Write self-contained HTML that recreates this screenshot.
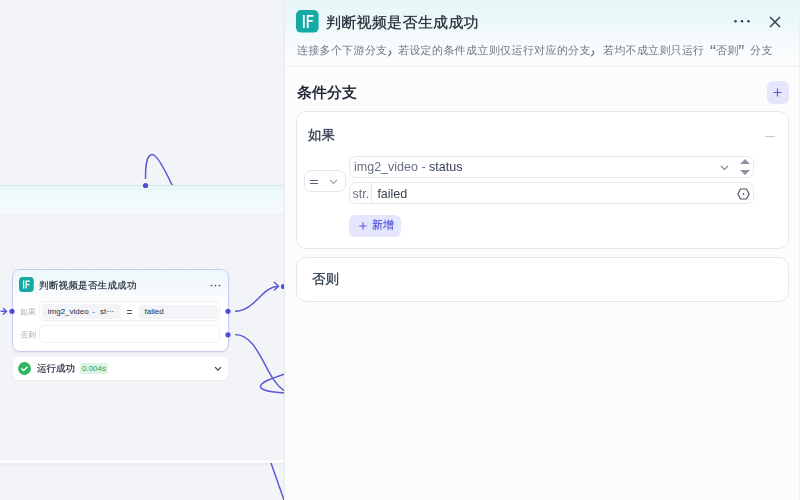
<!DOCTYPE html>
<html><head><meta charset="utf-8">
<style>
*{box-sizing:border-box;margin:0;padding:0}
html,body{width:800px;height:500px;overflow:hidden;background:#f2f4f7;font-family:"Liberation Sans",sans-serif}
body{position:relative}
.a{position:absolute}
.t{position:absolute;white-space:nowrap}
.s2{transform:scale(0.5);transform-origin:0 0;will-change:transform}
/* group container */
#grp{left:0;top:185px;width:285px;height:278px;background:#f2f4f7;border-top:1px solid #d3e6e5;box-shadow:0 2px 2px rgba(16,24,40,0.04)}
#grpHead{left:0;top:0;width:285px;height:27px;background:linear-gradient(180deg,#e9f7f8 0%,#f0fafa 50%,#f7fcfc 100%)}
#grpBody{left:0;top:27px;width:285px;height:247px;background-color:#f2f4f7;background-image:radial-gradient(circle at 2px 2px,#e6e8ec 0px,#e6e8ec 0.5px,rgba(242,244,247,0) 1.1px);background-size:12px 12px;background-position:-0.3px 5px}
#grpBottom{left:0;top:274px;width:285px;height:3px;background:#fdfdfe}
/* node */
#node{left:12px;top:269px;width:217px;height:82.5px;background:#fff;border:1px solid #c7cbf3;border-radius:8px;box-shadow:0 1px 2px rgba(16,24,40,0.05);overflow:hidden}
#nodeHead{left:0;top:0;width:100%;height:34px;background:linear-gradient(180deg,#ecf7f9 0%,#f5fafc 55%,#ffffff 100%)}
.nbox{position:absolute;background:#fff;border:1px solid #eff0f3;border-radius:5px}
.chip{position:absolute;background:#f2f4f7;border-radius:4px}
.ctext{font-size:8px;line-height:12px;color:#354052;-webkit-text-stroke:0.08px #354052}
#status{left:12.5px;top:357px;width:215px;height:23px;background:#fff;border-radius:6px;box-shadow:0 1px 2px rgba(16,24,40,0.04)}
/* panel */
#panel{left:285px;top:0;width:515px;height:500px;background:#fcfcfd;box-shadow:-1px 0 3px rgba(16,24,40,0.03)}
#pedge{left:284px;top:0;width:1px;height:500px;background:#e9ebef}
#phead{left:285px;top:0;width:515px;height:67px;background:linear-gradient(180deg,#e7f7f8 0%,#ebf8f9 30%,#f3fafb 55%,#f9fcfd 75%,#fcfcfd 100%);border-bottom:1px solid #eef0f3}
.pdesc{top:42px;font-size:22px;letter-spacing:1px;line-height:34px;color:#6d7485}
.card{position:absolute;background:#fff;border:1px solid #e4e7ec;border-radius:10px}
.row{position:absolute;background:#fff;border:1px solid #e6e8ed;border-radius:7px}
.vtext{font-size:12.5px;line-height:17px;color:#354052}
</style></head><body>

<!-- top curve (under group header) -->
<svg class="a" style="left:0;top:0" width="285" height="500">
  <path d="M145.5 179 C145.5 168 146 155 152 154.5 C157 154 166 172 172.5 186" fill="none" stroke="#5858d8" stroke-width="1.45"/>
</svg>

<div id="grp" class="a">
  <div id="grpHead" class="a"></div>
  <div id="grpBody" class="a"></div>
  <div id="grpBottom" class="a"></div>
</div>

<!-- edges -->
<svg class="a" style="left:0;top:0" width="285" height="500">
  <circle cx="145.5" cy="185.5" r="2.6" fill="#4b4fd8"/>
  <path d="M235 311.3 C255 311 262 286.5 278 286.3" fill="none" stroke="#5858d8" stroke-width="1.45"/>
  <path d="M274 282 L278.5 286.3 L274 290.5" fill="none" stroke="#5858d8" stroke-width="1.45"/>
  <path d="M235 334.6 C260 334.6 265 380 285 391" fill="none" stroke="#5858d8" stroke-width="1.45"/>
  <path d="M285 374 C270 379 258 383 261 388 C264 392 276 392 285 393" fill="none" stroke="#5858d8" stroke-width="1.45"/>
  <path d="M271 463 L284 500" fill="none" stroke="#5858d8" stroke-width="1.45"/>
  <path d="M0.5 311.3 L6 311.3 M3 308 L6.5 311.3 L3 314.6" fill="none" stroke="#5a5adf" stroke-width="1.4"/>
  <circle cx="283.5" cy="286.5" r="2.6" fill="#4b4fd8"/>
</svg>

<!-- node -->
<div id="node" class="a"><div id="nodeHead" class="a"></div></div>
<svg class="a" style="left:19.3px;top:277px" width="15" height="15" viewBox="0 0 15 15"><rect width="14.7" height="15" rx="3.5" fill="#15a9a4"/><path d="M4.6 3.6 V11.6 M7.1 11.6 V4.2 H11 M7.1 7.5 H10.5" fill="none" stroke="#fff" stroke-width="1.25"/></svg>
<div class="t s2" style="left:39.4px;top:278px;font-size:19px;letter-spacing:0.5px;line-height:30px;color:#2f3747;-webkit-text-stroke:0.5px #2f3747">判断视频是否生成成功</div>
<svg class="a" style="left:209.5px;top:283.5px" width="11" height="3" viewBox="0 0 11 3"><circle cx="1.5" cy="1.5" r="0.85" fill="#354052"/><circle cx="5.5" cy="1.5" r="0.85" fill="#354052"/><circle cx="9.5" cy="1.5" r="0.85" fill="#354052"/></svg>
<div class="t s2" style="left:20px;top:306.1px;font-size:16px;line-height:24px;color:#a3abb8">如果</div>
<div class="t s2" style="left:20px;top:329px;font-size:16px;line-height:24px;color:#a3abb8">否则</div>
<div class="nbox" style="left:39.4px;top:301.3px;width:180.8px;height:20px"></div>
<div class="chip" style="left:41.9px;top:304.4px;width:78.6px;height:14.3px"></div>
<div class="t ctext" style="left:47.75px;top:305.5px">img2_video</div>
<div class="t ctext" style="left:92.3px;top:305.5px">-</div>
<div class="t ctext" style="left:100px;top:305.5px">st···</div>
<div class="a" style="left:126.8px;top:309.6px;width:5.4px;height:1px;background:#4a5263"></div>
<div class="a" style="left:126.8px;top:312.6px;width:5.4px;height:1px;background:#4a5263"></div>
<div class="chip" style="left:138.5px;top:304.5px;width:79.5px;height:14.2px"></div>
<div class="t ctext" style="left:144.5px;top:305.5px">failed</div>
<div class="nbox" style="left:39.4px;top:325px;width:180.8px;height:18px"></div>
<svg class="a" style="left:0;top:0" width="285" height="500">
  <circle cx="12" cy="311.3" r="2.6" fill="#4b4fd8"/>
  <circle cx="228" cy="311.3" r="2.6" fill="#4b4fd8"/>
  <circle cx="228" cy="334.8" r="2.6" fill="#4b4fd8"/>
</svg>

<!-- run status -->
<div id="status" class="a"></div>
<svg class="a" style="left:18.2px;top:362.2px" width="13" height="13" viewBox="0 0 13 13"><circle cx="6.5" cy="6.5" r="6.4" fill="#2fb55d"/><path d="M3.7 6.7 L5.6 8.4 L9.2 4.9" fill="none" stroke="#fff" stroke-width="1.4" stroke-linecap="round" stroke-linejoin="round"/></svg>
<div class="t s2" style="left:37px;top:361.4px;font-size:19px;line-height:30px;color:#2f3747;-webkit-text-stroke:0.5px #2f3747">运行成功</div>
<div class="t" style="left:80px;top:362.7px;width:28px;height:11.5px;background:#dcf5e5;border-radius:2px;font-size:8px;line-height:11.5px;color:#28a05a;text-align:center">0.004s</div>
<svg class="a" style="left:214px;top:365.8px" width="8" height="6" viewBox="0 0 8 6"><path d="M1 1.2 L4 4.2 L7 1.2" fill="none" stroke="#354052" stroke-width="1.2"/></svg>

<!-- panel -->
<div id="panel" class="a"></div>
<div id="pedge" class="a"></div>
<div id="phead" class="a"></div>
<div class="a" style="left:799px;top:0;width:1px;height:500px;background:#eef0f3"></div>
<svg class="a" style="left:296.2px;top:10px" width="23" height="23" viewBox="0 0 23 23"><rect x="0" y="0" width="22.6" height="22.6" rx="5" fill="#14aaa6"/><path d="M7.8 5 V18 M11.7 18 V5.9 H17.6 M11.7 10.8 H16.8" fill="none" stroke="#fff" stroke-width="1.8"/></svg>
<div class="t s2" style="left:326px;top:11.6px;font-size:30px;letter-spacing:0.6px;line-height:42px;color:#262d3a;-webkit-text-stroke:0.5px #262d3a">判断视频是否生成成功</div>

<div class="t s2 pdesc" style="left:296.6px;letter-spacing:0.6px">连接多个下游分支</div>
<svg class="a" style="left:386.5px;top:50px" width="5" height="7" viewBox="0 0 5 7"><path d="M2.6 1.2 C3.6 1.2 3.9 2.2 3.5 3.3 C3.1 4.4 2.4 5.2 1.6 5.8" fill="none" stroke="#676f83" stroke-width="1.2" stroke-linecap="round"/></svg>
<div class="t s2 pdesc" style="left:397.9px;letter-spacing:0.7px">若设定的条件成立则仅运行对应的分支</div>
<svg class="a" style="left:590.4px;top:50px" width="5" height="7" viewBox="0 0 5 7"><path d="M2.6 1.2 C3.6 1.2 3.9 2.2 3.5 3.3 C3.1 4.4 2.4 5.2 1.6 5.8" fill="none" stroke="#676f83" stroke-width="1.2" stroke-linecap="round"/></svg>
<div class="t s2 pdesc" style="left:602.7px;letter-spacing:0.55px">若均不成立则只运行</div>
<div class="t" style="left:710px;top:43.7px;font-size:18px;line-height:17px;color:#6d7485">“</div>
<div class="t s2 pdesc" style="left:716.25px">否则</div>
<div class="t" style="left:738.2px;top:43.7px;font-size:18px;line-height:17px;color:#6d7485">”</div>
<div class="t s2 pdesc" style="left:749.6px">分支</div>

<svg class="a" style="left:732px;top:18px" width="20" height="6" viewBox="0 0 20 6"><circle cx="3.5" cy="3.3" r="1.3" fill="#354052"/><circle cx="10" cy="3.3" r="1.3" fill="#354052"/><circle cx="16.5" cy="3.3" r="1.3" fill="#354052"/></svg>
<svg class="a" style="left:769px;top:15.5px" width="12" height="12" viewBox="0 0 12 12"><path d="M1 1 L11 11 M11 1 L1 11" fill="none" stroke="#354052" stroke-width="1.5"/></svg>

<div class="t s2" style="left:297.2px;top:82.2px;font-size:30px;line-height:42px;color:#1f2634;-webkit-text-stroke:1px #1f2634">条件分支</div>
<div class="a" style="left:767px;top:80.5px;width:22px;height:23px;border-radius:6px;background:#e5e6fc"></div>
<svg class="a" style="left:773px;top:88px" width="9" height="9" viewBox="0 0 9 9"><path d="M4.5 0.5 V8.5 M0.5 4.5 H8.5" fill="none" stroke="#5054dc" stroke-width="1.1"/></svg>

<!-- if card -->
<div class="card" style="left:296px;top:111px;width:493px;height:138px"></div>
<div class="t s2" style="left:308.2px;top:126px;font-size:27px;line-height:36px;color:#354052;-webkit-text-stroke:0.6px #354052">如果</div>
<div class="a" style="left:765px;top:136.2px;width:9.5px;height:1.1px;background:#c4c9d2"></div>

<div class="row" style="left:304px;top:170px;width:42px;height:22px"></div>
<div class="a" style="left:310.3px;top:179.5px;width:7.7px;height:1.2px;background:#5d6577"></div>
<div class="a" style="left:310.3px;top:183px;width:7.7px;height:1.2px;background:#5d6577"></div>
<svg class="a" style="left:328.5px;top:179px" width="9" height="6" viewBox="0 0 9 6"><path d="M1 1 L4.5 4.5 L8 1" fill="none" stroke="#98a2b2" stroke-width="1.1"/></svg>

<div class="row" style="left:349px;top:155.5px;width:404.5px;height:22.5px"></div>
<div class="t vtext" style="left:354px;top:158.6px"><span style="color:#676f83">img2_video</span> <span style="color:#676f83">-</span> status</div>
<svg class="a" style="left:720.3px;top:164.5px" width="9" height="6" viewBox="0 0 9 6"><path d="M1 1 L4.5 4.5 L8 1" fill="none" stroke="#7d8596" stroke-width="1.1"/></svg>
<svg class="a" style="left:738.5px;top:157.5px" width="12" height="18" viewBox="0 0 12 18"><path d="M1 6 L6 1 L11 6 Z M1 12 L6 17 L11 12 Z" fill="#8a92a3"/></svg>

<div class="row" style="left:349px;top:182.4px;width:404.5px;height:22px"></div>
<div class="t vtext" style="left:352.5px;top:186.4px;color:#676f83">str.</div>
<div class="a" style="left:371.2px;top:182.4px;width:1px;height:22px;background:#e4e7ec"></div>
<div class="t vtext" style="left:377.4px;top:186.4px;color:#354052">failed</div>
<svg class="a" style="left:737px;top:187.5px" width="13" height="12" viewBox="0 0 13 12"><path d="M3.5 1 H9.5 L12.2 6 L9.5 11 H3.5 L0.8 6 Z" fill="none" stroke="#4a5263" stroke-width="1.15"/><circle cx="6.5" cy="6" r="0.9" fill="#4a5263"/></svg>

<div class="a" style="left:349.3px;top:215px;width:52px;height:21.6px;background:#e5e6fc;border-radius:6px"></div>
<svg class="a" style="left:358.5px;top:221.5px" width="8" height="8" viewBox="0 0 8 8"><path d="M4 0.3 V7.7 M0.3 4 H7.7" fill="none" stroke="#4f53de" stroke-width="1"/></svg>
<div class="t s2" style="left:372.4px;top:217.3px;font-size:22px;line-height:32px;color:#4f53de;-webkit-text-stroke:0.4px #4f53de">新增</div>

<!-- else card -->
<div class="card" style="left:296px;top:257px;width:493px;height:45px"></div>
<div class="t s2" style="left:311.8px;top:270.3px;font-size:27px;line-height:36px;color:#354052;-webkit-text-stroke:0.6px #354052">否则</div>

</body></html>
